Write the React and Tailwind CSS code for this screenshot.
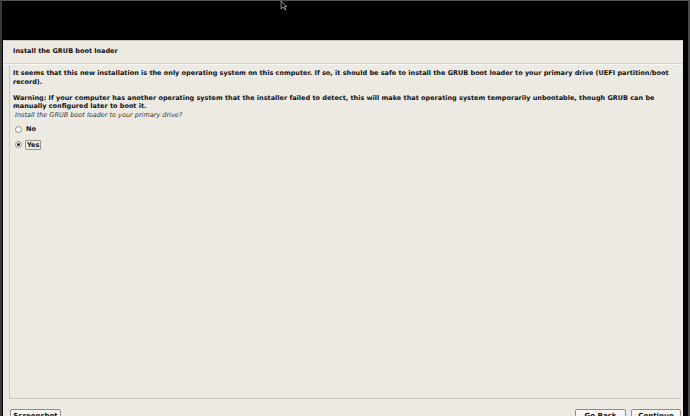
const font = { fontFamily: '"DejaVu Sans", Verdana, sans-serif' };

const Radio = ({ checked }) => (
  <span className="w-[7px] h-[7px] rounded-full border border-[#8d8a85] bg-white flex items-center justify-center shrink-0">
    {checked && <span className="w-[3px] h-[3px] rounded-full bg-[#222]" />}
  </span>
);

const Button = ({ children, className = "" }) => (
  <div
    className={
      "h-[16px] rounded-[2px] border border-[#8f8c86] bg-gradient-to-b from-[#fbfaf8] to-[#e8e5df] flex justify-center pt-[1px] text-[7px] font-bold text-[#111] " +
      className
    }
  >
    {children}
  </div>
);

export default function App() {
  return (
    <div
      className="w-[690px] h-[416px] bg-black overflow-hidden relative border-t border-[#555] border-l-2 border-l-[#3a3a3a] border-r-2 border-r-[#4a4a4a]"
      style={font}
    >
      {/* mouse pointer */}
      <svg className="absolute left-[278px] top-0" width="8" height="10" viewBox="0 0 8 10">
        <path d="M1 0 L1 8 L3 6 L5 9 L6 8.5 L4.5 5.5 L7 5.5 Z" fill="#111" stroke="#bbb" strokeWidth="0.7" />
      </svg>

      <div className="h-[39px]" />

      <div className="ml-[1px] w-[680px] h-[376px] bg-[#edeae4] border-t border-[#c9c6c0] flex flex-col">
        {/* title */}
        <div className="h-[22px] shrink-0 flex items-center pl-[10px] text-[6.5px] font-bold text-[#111]">
          Install the GRUB boot loader
        </div>
        <div className="shrink-0 border-t border-[#d6d2ca] border-b border-b-[#f7f6f3]" />

        {/* content frame */}
        <div className="shrink-0 ml-[6px] mr-[2px] h-[334px] border-l border-b border-[#cdc9c1] pl-[3px] pt-[4px] text-[6.5px] leading-[8.5px] text-[#111]">
          <div className="font-bold">
            <div className="whitespace-nowrap">
              It seems that this new installation is the only operating system on this computer. If so, it should be safe to install the GRUB boot loader to your primary drive (UEFI partition/boot
            </div>
            <div>record).</div>
          </div>
          <div className="font-bold mt-[7.5px]">
            <div className="whitespace-nowrap">
              Warning: If your computer has another operating system that the installer failed to detect, this will make that operating system temporarily unbootable, though GRUB can be
            </div>
            <div>manually configured later to boot it.</div>
          </div>
          <div className="italic text-[#333] pl-[2px] mt-[0.5px]">
            Install the GRUB boot loader to your primary drive?
          </div>
          <div className="flex flex-col gap-[5px] mt-[5px] pl-[2px] font-bold">
            <div className="flex items-center gap-[3px] h-[10px]">
              <Radio />
              <span className="px-[1px]">No</span>
            </div>
            <div className="flex items-center gap-[3px] h-[10px]">
              <Radio checked />
              <span className="px-[1px] border border-[#9a968f] rounded-[1px] leading-[8px]">Yes</span>
            </div>
          </div>
        </div>

        {/* buttons */}
        <div className="shrink-0 flex items-start pt-[10px] pl-[7px] pr-[2px]">
          <Button className="w-[51px]">Screenshot</Button>
          <div className="flex-1" />
          <div className="flex gap-[5px]">
            <Button className="w-[51px]">Go Back</Button>
            <Button className="w-[50px]">Continue</Button>
          </div>
        </div>
      </div>
    </div>
  );
}
